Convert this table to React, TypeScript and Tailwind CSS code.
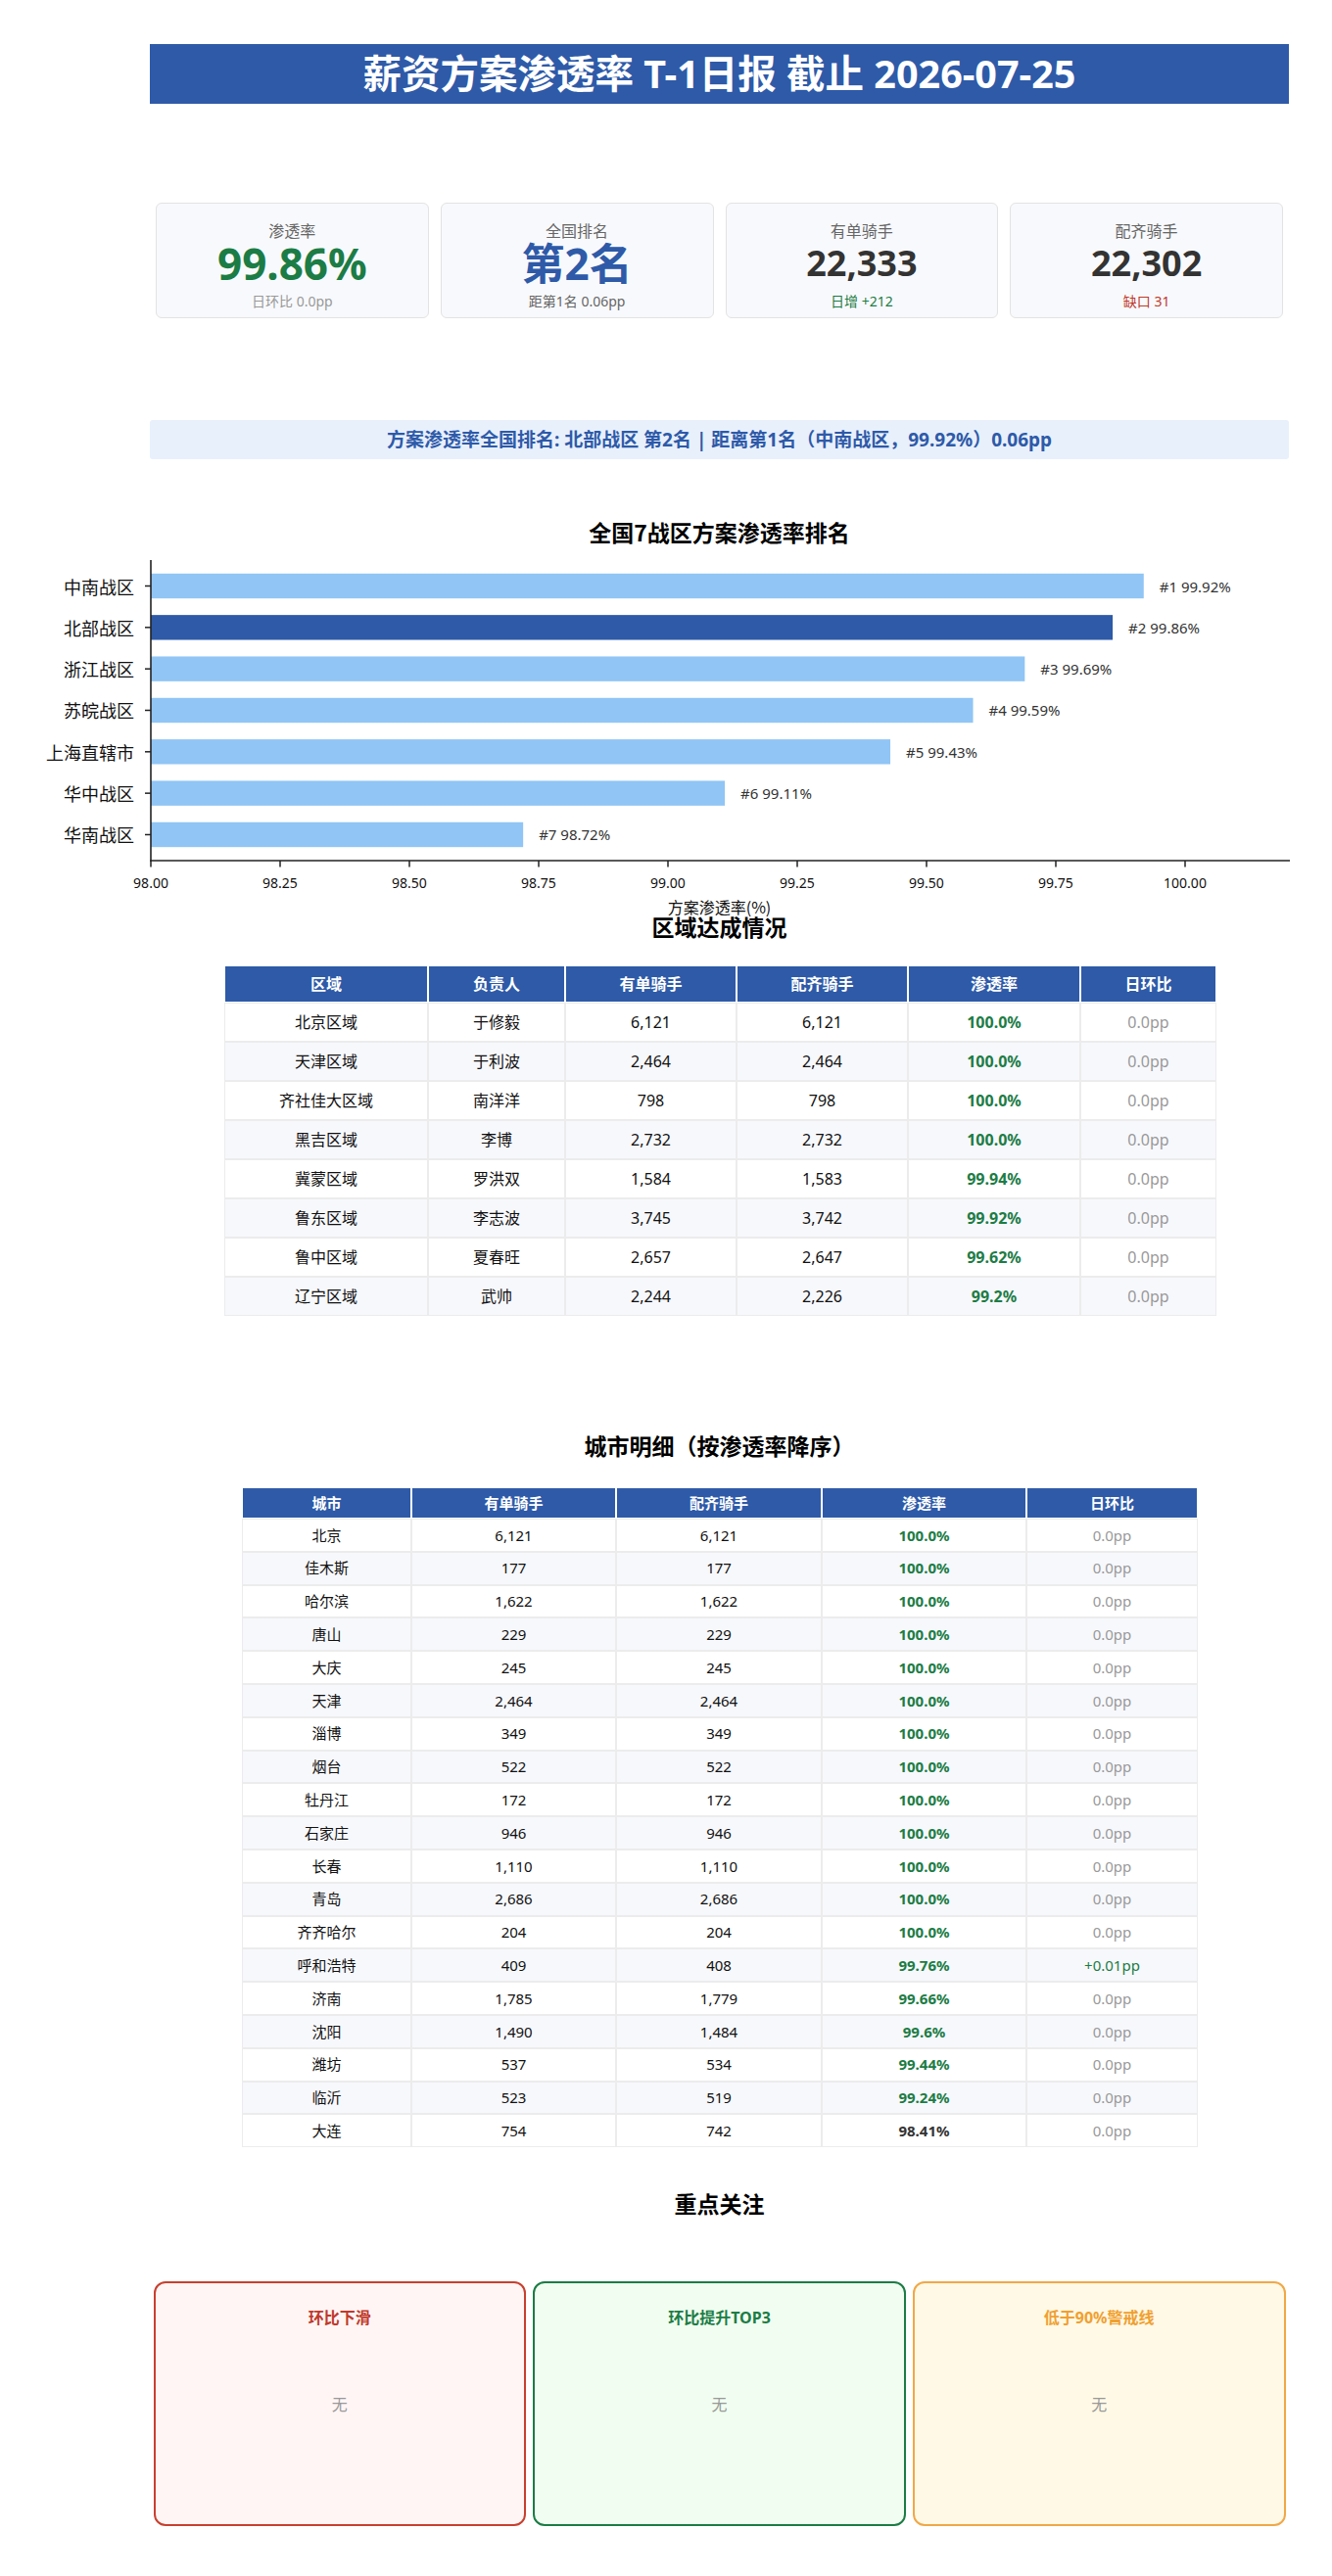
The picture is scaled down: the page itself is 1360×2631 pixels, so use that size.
import React from "react";

const regions = [
  ["北京区域", "于修毅", "6,121", "6,121", "100.0%", "0.0pp"],
  ["天津区域", "于利波", "2,464", "2,464", "100.0%", "0.0pp"],
  ["齐社佳大区域", "南洋洋", "798", "798", "100.0%", "0.0pp"],
  ["黑吉区域", "李博", "2,732", "2,732", "100.0%", "0.0pp"],
  ["冀蒙区域", "罗洪双", "1,584", "1,583", "99.94%", "0.0pp"],
  ["鲁东区域", "李志波", "3,745", "3,742", "99.92%", "0.0pp"],
  ["鲁中区域", "夏春旺", "2,657", "2,647", "99.62%", "0.0pp"],
  ["辽宁区域", "武帅", "2,244", "2,226", "99.2%", "0.0pp"],
];

const cities: [string, string, string, string, string, boolean, boolean][] = [
  ["北京", "6,121", "6,121", "100.0%", "0.0pp", true, false],
  ["佳木斯", "177", "177", "100.0%", "0.0pp", true, false],
  ["哈尔滨", "1,622", "1,622", "100.0%", "0.0pp", true, false],
  ["唐山", "229", "229", "100.0%", "0.0pp", true, false],
  ["大庆", "245", "245", "100.0%", "0.0pp", true, false],
  ["天津", "2,464", "2,464", "100.0%", "0.0pp", true, false],
  ["淄博", "349", "349", "100.0%", "0.0pp", true, false],
  ["烟台", "522", "522", "100.0%", "0.0pp", true, false],
  ["牡丹江", "172", "172", "100.0%", "0.0pp", true, false],
  ["石家庄", "946", "946", "100.0%", "0.0pp", true, false],
  ["长春", "1,110", "1,110", "100.0%", "0.0pp", true, false],
  ["青岛", "2,686", "2,686", "100.0%", "0.0pp", true, false],
  ["齐齐哈尔", "204", "204", "100.0%", "0.0pp", true, false],
  ["呼和浩特", "409", "408", "99.76%", "+0.01pp", true, true],
  ["济南", "1,785", "1,779", "99.66%", "0.0pp", true, false],
  ["沈阳", "1,490", "1,484", "99.6%", "0.0pp", true, false],
  ["潍坊", "537", "534", "99.44%", "0.0pp", true, false],
  ["临沂", "523", "519", "99.24%", "0.0pp", true, false],
  ["大连", "754", "742", "98.41%", "0.0pp", false, false],
];

const bars = [
  ["中南战区", 99.92],
  ["北部战区", 99.86],
  ["浙江战区", 99.69],
  ["苏皖战区", 99.59],
  ["上海直辖市", 99.43],
  ["华中战区", 99.11],
  ["华南战区", 98.72],
] as [string, number][];

const xOf = (v: number) => 1 + (v - 98) * 528;

function Chart() {
  const ticks = [0, 1, 2, 3, 4, 5, 6, 7, 8].map((t) => 98 + t * 0.25);
  return (
    <svg
      width={1163}
      height={416}
      viewBox="0 0 1163 416"
      className="block overflow-visible"
      style={{ fontFamily: "'Noto Sans CJK SC','Noto Sans',sans-serif" }}
    >
      <text x={581.5} y={23} textAnchor="middle" dominantBaseline="central" fontSize={23} fontWeight={700} fill="#000">
        全国7战区方案渗透率排名
      </text>
      {bars.map(([name, v], i) => {
        const cy = 78.5 + 42.33 * i;
        return (
          <g key={name}>
            <rect x={1} y={cy - 12.7} width={xOf(v) - 1} height={25.4} fill={i === 1 ? "#2e5aa8" : "#90c5f5"} />
            <line x1={-5} y1={cy} x2={1} y2={cy} stroke="#222" strokeWidth={1.5} />
            <text x={-16} y={cy} textAnchor="end" dominantBaseline="central" fontSize={18} fill="#111">
              {name}
            </text>
            <text
              x={xOf(v) + 16}
              y={cy}
              dominantBaseline="central"
              fontSize={15}
              fill="#333"
              style={{ fontFamily: "'Noto Sans',sans-serif" }}
            >
              {`#${i + 1} ${v.toFixed(2)}%`}
            </text>
          </g>
        );
      })}
      <line x1={1} y1={52} x2={1} y2={359.8} stroke="#222" strokeWidth={1.6} />
      <line x1={0.2} y1={359} x2={1164} y2={359} stroke="#222" strokeWidth={1.6} />
      {ticks.map((v) => (
        <g key={v}>
          <line x1={xOf(v)} y1={359} x2={xOf(v)} y2={365.5} stroke="#222" strokeWidth={1.5} />
          <text
            x={xOf(v)}
            y={381}
            textAnchor="middle"
            dominantBaseline="central"
            fontSize={14}
            fill="#111"
            style={{ fontFamily: "'Noto Sans',sans-serif" }}
          >
            {v.toFixed(2)}
          </text>
        </g>
      ))}
      <text x={581.5} y={406} textAnchor="middle" dominantBaseline="central" fontSize={16} fill="#111">
        方案渗透率(%)
      </text>
    </svg>
  );
}

function StatCard({
  label,
  value,
  valueClass,
  sub,
  subClass,
}: {
  label: string;
  value: string;
  valueClass: string;
  sub: string;
  subClass: string;
}) {
  return (
    <div className="flex h-[118px] flex-1 flex-col items-center rounded-[6px] border border-[#e3e3e3] bg-[#f8f9fc] pt-[18px]">
      <div className="text-[16px] leading-[20px] text-[#666]">{label}</div>
      <div className={"mt-[-1px] h-[48px] font-bold leading-[48px] " + valueClass}>{value}</div>
      <div className={"mt-[5px] text-[14px] leading-[20px] " + subClass}>{sub}</div>
    </div>
  );
}

function AlertCard({ title, titleClass, boxClass }: { title: string; titleClass: string; boxClass: string }) {
  return (
    <div className={"flex h-[250px] flex-1 flex-col items-center rounded-[12px] border-2 pt-[23px] " + boxClass}>
      <div className={"text-[16px] font-bold leading-[24px] " + titleClass}>{title}</div>
      <div className="mt-[65px] text-[16px] leading-[24px] text-[#999]">无</div>
    </div>
  );
}

export default function App() {
  return (
    <div className="min-h-[2631px] w-[1360px] bg-white font-['Noto_Sans','Noto_Sans_CJK_SC',sans-serif] text-[#222]">
      <div className="ml-[153px] w-[1163px] pt-[45px] pb-[51px]">
        <div className="flex h-[61px] items-center justify-center bg-[#2e5aa8] text-[39.5px] font-bold text-white">
          薪资方案渗透率 T-1日报 截止 2026-07-25
        </div>

        <div className="mt-[101px] flex gap-[12px] px-[6px]">
          <StatCard label="渗透率" value="99.86%" valueClass="text-[44px] text-[#1c7c45]" sub="日环比 0.0pp" subClass="text-[#999]" />
          <StatCard label="全国排名" value="第2名" valueClass="text-[44px] text-[#2e5aa8]" sub="距第1名 0.06pp" subClass="text-[#666]" />
          <StatCard label="有单骑手" value="22,333" valueClass="text-[36px] text-[#333]" sub="日增 +212" subClass="text-[#1c7c45]" />
          <StatCard label="配齐骑手" value="22,302" valueClass="text-[36px] text-[#333]" sub="缺口 31" subClass="text-[#c0392b]" />
        </div>

        <div className="mt-[104px] flex h-[40px] items-center justify-center rounded-[3px] bg-[#e8f0fc] text-[19px] font-bold text-[#2e5aa8]">
          方案渗透率全国排名: 北部战区 第2名 | 距离第1名（中南战区，99.92%）0.06pp
        </div>

        <div className="mt-[51px]">
          <Chart />
        </div>

        <h2 className="mt-[-4px] text-center text-[23px] font-bold leading-[30px] text-black">区域达成情况</h2>

        <table className="ml-[76px] mt-[24px] w-[1013px] table-fixed border-separate border-spacing-0">
          <colgroup>
            <col className="w-[208px]" />
            <col className="w-[140px]" />
            <col className="w-[175px]" />
            <col className="w-[175px]" />
            <col className="w-[176px]" />
            <col className="w-[139px]" />
          </colgroup>
          <thead>
            <tr>
              {["区域", "负责人", "有单骑手", "配齐骑手", "渗透率", "日环比"].map((h) => (
                <th key={h} className="h-[38px] border border-white bg-[#2e5aa8] p-0 text-center text-[16px] font-bold text-white">
                  {h}
                </th>
              ))}
            </tr>
          </thead>
          <tbody>
            {regions.map((r, i) => (
              <tr key={r[0]} className={i % 2 === 1 ? "bg-[#f7f8fc]" : "bg-white"}>
                <td className="h-[40px] border border-[#ececec] p-0 text-center text-[16px] text-[#111]">{r[0]}</td>
                <td className="h-[40px] border border-[#ececec] p-0 text-center text-[16px] text-[#111]">{r[1]}</td>
                <td className="h-[40px] border border-[#ececec] p-0 text-center text-[16px] text-[#111]">{r[2]}</td>
                <td className="h-[40px] border border-[#ececec] p-0 text-center text-[16px] text-[#111]">{r[3]}</td>
                <td className="h-[40px] border border-[#ececec] p-0 text-center text-[16px] font-bold text-[#1c7c45]">{r[4]}</td>
                <td className="h-[40px] border border-[#ececec] p-0 text-center text-[16px] text-[#999]">{r[5]}</td>
              </tr>
            ))}
          </tbody>
        </table>

        <h2 className="mt-[118px] text-center text-[23px] font-bold leading-[30px] text-black">城市明细（按渗透率降序）</h2>

        <table className="ml-[94px] mt-[27px] w-[976px] table-fixed border-separate border-spacing-0">
          <colgroup>
            <col className="w-[173px]" />
            <col className="w-[209px]" />
            <col className="w-[210px]" />
            <col className="w-[209px]" />
            <col className="w-[175px]" />
          </colgroup>
          <thead>
            <tr>
              {["城市", "有单骑手", "配齐骑手", "渗透率", "日环比"].map((h) => (
                <th key={h} className="h-[32px] border border-white bg-[#2e5aa8] p-0 text-center text-[15px] font-bold text-white">
                  {h}
                </th>
              ))}
            </tr>
          </thead>
          <tbody>
            {cities.map((c, i) => (
              <tr key={c[0]} className={i % 2 === 1 ? "bg-[#f7f8fc]" : "bg-white"}>
                <td className="h-[33.8px] border border-[#ececec] p-0 text-center text-[15px] text-[#111]">{c[0]}</td>
                <td className="h-[33.8px] border border-[#ececec] p-0 text-center text-[15px] text-[#111]">{c[1]}</td>
                <td className="h-[33.8px] border border-[#ececec] p-0 text-center text-[15px] text-[#111]">{c[2]}</td>
                <td
                  className={
                    "h-[33.8px] border border-[#ececec] p-0 text-center text-[15px] font-bold " +
                    (c[5] ? "text-[#1c7c45]" : "text-[#333]")
                  }
                >
                  {c[3]}
                </td>
                <td
                  className={
                    "h-[33.8px] border border-[#ececec] p-0 text-center text-[15px] " +
                    (c[6] ? "text-[#1c7c45]" : "text-[#999]")
                  }
                >
                  {c[4]}
                </td>
              </tr>
            ))}
          </tbody>
        </table>

        <h2 className="mt-[43px] text-center text-[23px] font-bold leading-[30px] text-black">重点关注</h2>

        <div className="mt-[64px] flex gap-[7px] px-[3.5px]">
          <AlertCard title="环比下滑" titleClass="text-[#c0392b]" boxClass="border-[#c8402f] bg-[#fff5f5]" />
          <AlertCard title="环比提升TOP3" titleClass="text-[#1c7c45]" boxClass="border-[#1c7c45] bg-[#f0fdf0]" />
          <AlertCard title="低于90%警戒线" titleClass="text-[#f0a030]" boxClass="border-[#f0a848] bg-[#fff9e6]" />
        </div>
      </div>
    </div>
  );
}
